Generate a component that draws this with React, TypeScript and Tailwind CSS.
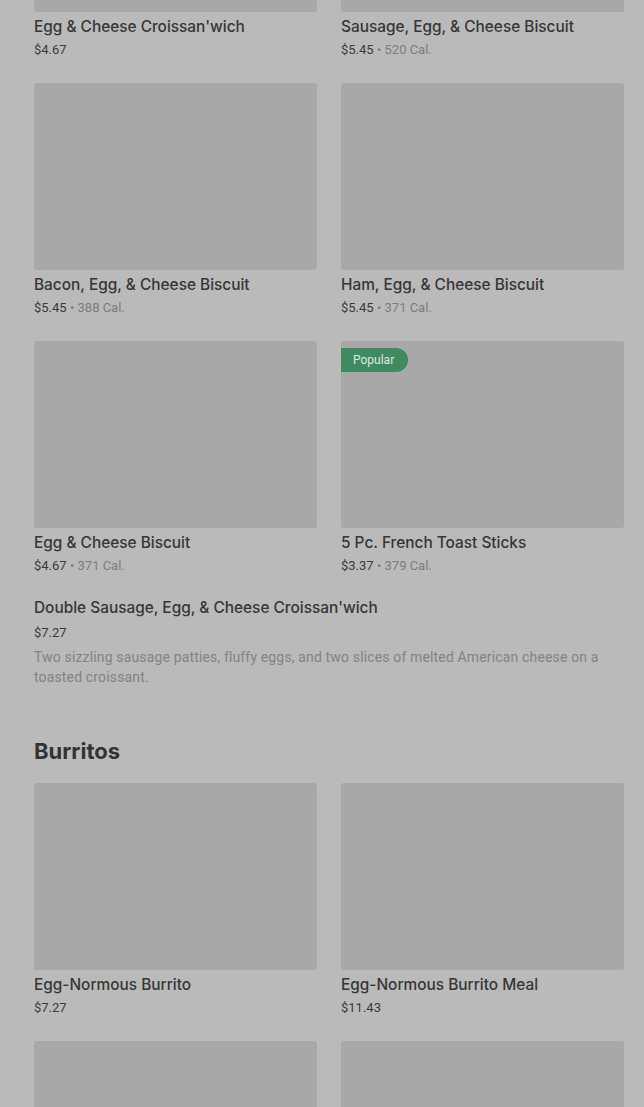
import React from "react";

type Item = { name: string; price: string; cal?: string; popular?: boolean };

const font = { fontFamily: "Roboto, 'Liberation Sans', sans-serif" };
const titleFont = { fontFamily: "Inter, Roboto, 'Liberation Sans', sans-serif" };

function Card({ item }: { item: Item }) {
  return (
    <div className="flex flex-col">
      <div className="relative h-[187px] rounded-[3px] bg-[#a8a8a8]">
        {item.popular && (
          <div className="absolute left-0 top-[7px] flex h-[24px] items-center rounded-r-full bg-[#3f8a60] pl-[12px] pr-[14px] text-[12px] text-[#dfe9e2]">
            Popular
          </div>
        )}
      </div>
      <div className="mt-[5px] text-[15.4px] font-medium leading-[20px] text-[#363636]" style={titleFont}>
        {item.name}
      </div>
      <div className="mt-[3px] text-[13px] leading-[20px]">
        <span className="text-[#3a3a3a]">{item.price}</span>
        {item.cal && (
          <span className="text-[#7d7d7d]">
            {" "}
            • {item.cal}
          </span>
        )}
      </div>
    </div>
  );
}

const breakfast: Item[] = [
  { name: "Egg & Cheese Croissan'wich", price: "$4.67" },
  { name: "Sausage, Egg, & Cheese Biscuit", price: "$5.45", cal: "520 Cal." },
  { name: "Bacon, Egg, & Cheese Biscuit", price: "$5.45", cal: "388 Cal." },
  { name: "Ham, Egg, & Cheese Biscuit", price: "$5.45", cal: "371 Cal." },
  { name: "Egg & Cheese Biscuit", price: "$4.67", cal: "371 Cal." },
  { name: "5 Pc. French Toast Sticks", price: "$3.37", cal: "379 Cal.", popular: true },
];

const burritos: Item[] = [
  { name: "Egg-Normous Burrito", price: "$7.27" },
  { name: "Egg-Normous Burrito Meal", price: "$11.43" },
  { name: "", price: "" },
  { name: "", price: "" },
];

export default function App() {
  return (
    <div className="h-[1107px] overflow-hidden bg-[#bababa]" style={font}>
      <div className="-mt-[175px] pl-[34px] pr-[20px]">
        <div className="grid grid-cols-2 gap-x-6 gap-y-[23px]">
          {breakfast.map((it, i) => (
            <Card key={i} item={it} />
          ))}
        </div>
        <div className="mt-[20px]">
          <div className="text-[15.4px] font-medium leading-[24px] text-[#363636]" style={titleFont}>
            Double Sausage, Egg, &amp; Cheese Croissan'wich
          </div>
          <div className="mt-[3px] text-[13px] leading-[20px] text-[#3a3a3a]">$7.27</div>
          <div className="mt-[4px] text-[14px] leading-[20px] tracking-[0.15px] text-[#838383]">
            Two sizzling sausage patties, fluffy eggs, and two slices of melted American cheese on a toasted croissant.
          </div>
        </div>
        <h2 className="mt-[50px] text-[22px] font-bold leading-[28px] text-[#333333]" style={titleFont}>
          Burritos
        </h2>
        <div className="mt-[18px] grid grid-cols-2 gap-x-6 gap-y-[23px]">
          {burritos.map((it, i) => (
            <Card key={i} item={it} />
          ))}
        </div>
      </div>
    </div>
  );
}
